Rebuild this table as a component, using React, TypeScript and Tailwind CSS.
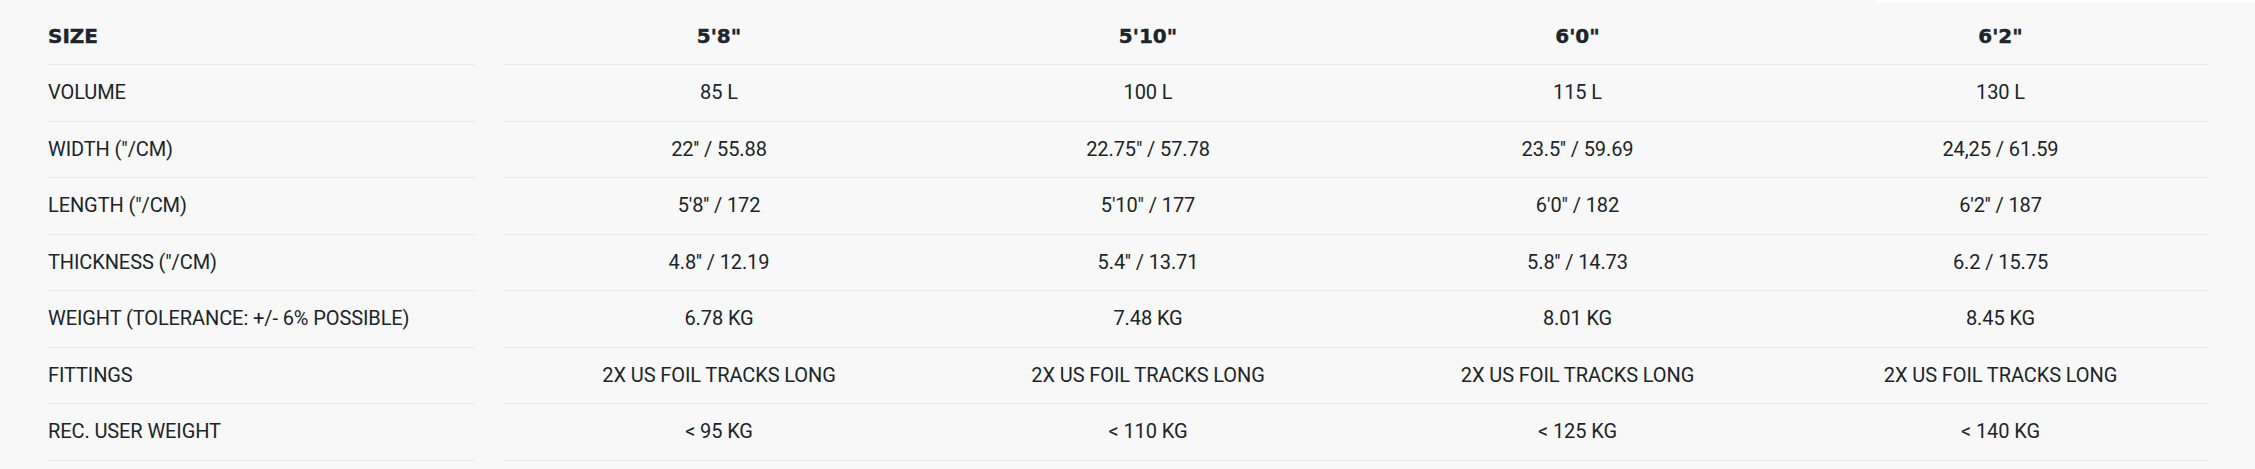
import React from "react";

const sizes = ["5'8\"", "5'10\"", "6'0\"", "6'2\""];

const rows: { label: string; values: string[] }[] = [
  { label: "VOLUME", values: ["85 L", "100 L", "115 L", "130 L"] },
  { label: "WIDTH (\"/CM)", values: ["22'' / 55.88", "22.75\" / 57.78", "23.5'' / 59.69", "24,25 / 61.59"] },
  { label: "LENGTH (\"/CM)", values: ["5'8'' / 172", "5'10\" / 177", "6'0\" / 182", "6'2'' / 187"] },
  { label: "THICKNESS (\"/CM)", values: ["4.8'' / 12.19", "5.4'' / 13.71", "5.8'' / 14.73", "6.2 / 15.75"] },
  { label: "WEIGHT (TOLERANCE: +/- 6% POSSIBLE)", values: ["6.78 KG", "7.48 KG", "8.01 KG", "8.45 KG"] },
  { label: "FITTINGS", values: ["2X US FOIL TRACKS LONG", "2X US FOIL TRACKS LONG", "2X US FOIL TRACKS LONG", "2X US FOIL TRACKS LONG"] },
  { label: "REC. USER WEIGHT", values: ["< 95 KG", "< 110 KG", "< 125 KG", "< 140 KG"] },
];

const head = "font-['DejaVu_Sans',sans-serif] font-bold text-[20px] leading-[30px] [-webkit-text-stroke:0.4px_currentColor]";
const body = "font-['Roboto',sans-serif] text-[20px] leading-[30px] tracking-[-0.1px]";

export default function App() {
  return (
    <div className="relative w-[2255px] h-[469px] bg-[#f8f8f8] text-[#1b252b] overflow-hidden">
      <div className="absolute top-0 left-[1877px] right-0 h-[3px] bg-white" />
      <div className="flex flex-col pl-[48px]">
        <div className="flex">
          <div className={`w-[427px] h-[65px] pt-[21px] border-b border-[#e9e9e9] ${head}`}>SIZE</div>
          <div className="ml-[29px] w-[1704px] h-[65px] grid grid-cols-[430px_428px_431px_415px] border-b border-[#e9e9e9]">
            {sizes.map((s) => (
              <div key={s} className={`pt-[21px] text-center ${head}`}>{s}</div>
            ))}
          </div>
        </div>
        {rows.map((r) => (
          <div key={r.label} className="flex h-[56.5px]">
            <div className={`w-[427px] pt-[12px] border-b border-[#e9e9e9] ${body}`}>{r.label}</div>
            <div className="ml-[29px] w-[1704px] grid grid-cols-[430px_428px_431px_415px] border-b border-[#e9e9e9]">
              {r.values.map((v, i) => (
                <div key={i} className={`pt-[12px] text-center ${body}`}>{v}</div>
              ))}
            </div>
          </div>
        ))}
      </div>
    </div>
  );
}
